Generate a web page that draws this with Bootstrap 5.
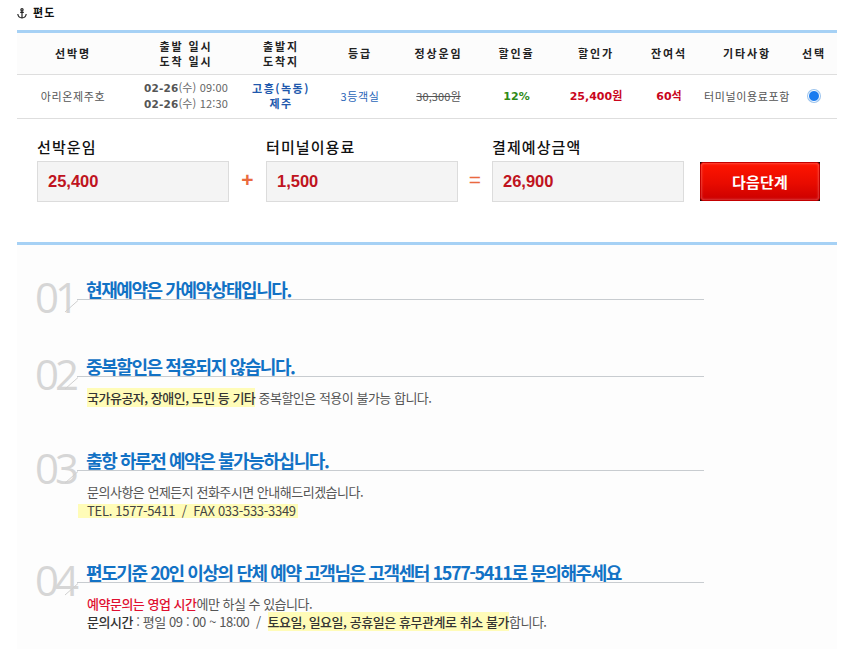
<!DOCTYPE html>
<html lang="ko">
<head>
<meta charset="utf-8">
<title>편도</title>
<link href="https://cdn.jsdelivr.net/npm/bootstrap@5.3.0/dist/css/bootstrap.min.css" rel="stylesheet">
<style>
html,body{height:649px;overflow:hidden}
body{background:#fff;font-family:"Noto Sans CJK KR","Liberation Sans",sans-serif;font-size:11px;color:#333}
.wrap-page{padding:0 15px 0 17px;width:852px}
.trip-head{height:30px;padding-top:4px;font-size:11px;font-weight:700;color:#111;line-height:16px;letter-spacing:1.2px;gap:6px}
.trip-table{table-layout:fixed;width:820px;margin:0;border-top:3px solid #a6d1f5;--bs-table-bg:transparent}
.trip-table th,.trip-table td{padding:0;text-align:center;vertical-align:middle;border-bottom:1px solid #dedede;font-size:11px;letter-spacing:.6px}
.trip-table th{height:43px;background:#fcfcfc;color:#222;font-weight:700;line-height:15px;letter-spacing:1.9px}
.trip-table td{height:44px;color:#555;line-height:15px;font-weight:400;padding-bottom:1px}
.c1{width:112px}.c2{width:114px}.c3{width:76px}.c4{width:82px}.c5{width:75px}.c6{width:81px}.c7{width:78px}.c8{width:68px}.c9{width:88px}.c10{width:46px}
.dtm{display:block;white-space:nowrap;color:#666;letter-spacing:.15px}
.dtm b{font-family:"DejaVu Sans",sans-serif;font-size:10.5px;color:#555}
.trip-table td.place{color:#2058ad;font-weight:700;letter-spacing:1.5px}
.trip-table td.grade{color:#2a66b8}
.old-fare{text-decoration:line-through;color:#555;letter-spacing:.1px}
.trip-table td.rate{color:#2f8a17;font-weight:700;font-family:"DejaVu Sans",sans-serif;letter-spacing:0}
.trip-table td.sale{color:#c9061c;font-weight:700;font-family:"DejaVu Sans","Noto Sans CJK KR",sans-serif;letter-spacing:0}
.pick.form-check-input{display:block;width:12px;height:12px;margin:0 auto;float:none;background:#1a7bef;border:1.500px solid #fff;box-shadow:0 0 0 1px #9cc4ee}
.fare-row{padding:19px 0 0 20px;height:126px;border-bottom:3px solid #a6d1f5}
.fare-cell{width:192px}
.fare-label{font-size:15px;line-height:17px;height:18px;font-weight:500;color:#111;letter-spacing:1.1px;margin-bottom:5px;white-space:nowrap}
.fare-box{height:41px;background:#f4f4f4;border:1px solid #dcdcdc;padding-left:10px;font:700 16.5px/39px "Liberation Sans",sans-serif;color:#bf1320}
.op{width:37px;height:41px;margin-top:23px;text-align:center;font:400 21px/38px "Liberation Sans",sans-serif;color:#ea6a3f}
.op-plus{font-weight:700}
.op-eq{width:34px}
.next-btn{width:120px;height:39px;margin:24px 0 0 16px;padding:0;border:0;border-radius:0;background:#111;color:#fff;font-weight:700;font-size:15px;letter-spacing:.2px}
.next-face{display:block;height:39px;line-height:37px;border:1px solid #c40000;border-radius:3px;background:linear-gradient(#ff1500,#e80b00 55%,#cc0000);box-shadow:inset 0 0 3px rgba(255,255,255,.45)}
.notice{background:#fdfdfd;height:404px;padding-top:29px}
.note-item{position:relative;width:687px;padding-left:70px}
.note-no{position:absolute;left:18px;top:0;font:400 42px/46px "Open Sans","Liberation Sans",sans-serif;color:#d6d6d6;letter-spacing:-4px}
.note-slash{position:absolute;left:47px;top:25px}
.note-title{height:26px;margin:0 0 0 -10px;padding-left:9px;border-bottom:1px solid #c8ccd0;font-size:18px;line-height:30px;font-weight:700;color:#1272c5;letter-spacing:-1.42px;white-space:nowrap}
.note-text{font-size:13px;line-height:18px;color:#555;letter-spacing:-.5px;white-space:nowrap}
.note-text b{font-weight:500;color:#333}
.note-text .alert-red{color:#e01030}
.last-line{word-spacing:.25px}
.hilite{background:#fffcb8}
.tel-line{display:inline-block;margin-left:-9px;padding:0 2px 0 9px;color:#444;letter-spacing:-.28px;line-height:14px;margin-top:3px}
.n1{height:77px}.n2{height:94px}.n3{height:112px}
.body-1{padding-top:12px}
</style>
</head>
<body>
<div class="wrap-page">
  <div class="trip-head d-flex align-items-start">
    <svg width="10" height="11" viewBox="0 0 10 11" class="mt-1" fill="none" stroke="#222" stroke-width="1.2"><circle cx="5" cy="1.8" r="1.1"/><path d="M5 3v7M3.2 4.4h3.600M.8 6c.3 2.500 2 3.800 4.200 4 2.200-.2 3.900-1.500 4.200-4"/></svg>
    <span>편도</span>
  </div>
  <table class="table trip-table">
    <colgroup><col class="c1"><col class="c2"><col class="c3"><col class="c4"><col class="c5"><col class="c6"><col class="c7"><col class="c8"><col class="c9"><col class="c10"></colgroup>
    <thead>
      <tr><th>선박명</th><th>출발 일시<br>도착 일시</th><th>출발지<br>도착지</th><th>등급</th><th>정상운임</th><th>할인율</th><th>할인가</th><th>잔여석</th><th>기타사항</th><th>선택</th></tr>
    </thead>
    <tbody>
      <tr>
        <td>아리온제주호</td>
        <td><span class="dtm"><b>02-26</b>(수) 09:00</span><span class="dtm"><b>02-26</b>(수) 12:30</span></td>
        <td class="place">고흥(녹동)<br>제주</td>
        <td class="grade">3등객실</td>
        <td><span class="old-fare">30,300원</span></td>
        <td class="rate">12%</td>
        <td class="sale">25,400원</td>
        <td class="sale">60석</td>
        <td>터미널이용료포함</td>
        <td><input class="form-check-input pick" type="radio" name="pick" checked aria-label="선택"></td>
      </tr>
    </tbody>
  </table>
  <div class="fare-row d-flex align-items-start">
    <div class="fare-cell"><div class="fare-label">선박운임</div><div class="fare-box">25,400</div></div>
    <div class="op op-plus">+</div>
    <div class="fare-cell"><div class="fare-label">터미널이용료</div><div class="fare-box">1,500</div></div>
    <div class="op op-eq">=</div>
    <div class="fare-cell"><div class="fare-label">결제예상금액</div><div class="fare-box">26,900</div></div>
    <button type="button" class="btn next-btn"><span class="next-face">다음단계</span></button>
  </div>
  <div class="notice">
    <div class="note-item n1">
      <span class="note-no">01</span>
      <svg class="note-slash" width="16" height="14" viewBox="0 0 16 14"><path d="M1 13 14 1.500" stroke="#d0d0d0" fill="none"/></svg>
      <h2 class="note-title">현재예약은 가예약상태입니다.</h2>
    </div>
    <div class="note-item n2">
      <span class="note-no">02</span>
      <svg class="note-slash" width="16" height="14" viewBox="0 0 16 14"><path d="M1 13 14 1.500" stroke="#d0d0d0" fill="none"/></svg>
      <h2 class="note-title">중복할인은 적용되지 않습니다.</h2>
      <div class="note-text body-1"><b class="hilite">국가유공자, 장애인, 도민 등 기타</b> 중복할인은 적용이 불가능 합니다.</div>
    </div>
    <div class="note-item n3">
      <span class="note-no">03</span>
      <svg class="note-slash" width="16" height="14" viewBox="0 0 16 14"><path d="M1 13 14 1.500" stroke="#d0d0d0" fill="none"/></svg>
      <h2 class="note-title">출항 하루전 예약은 불가능하십니다.</h2>
      <div class="note-text body-1">문의사항은 언제든지 전화주시면 안내해드리겠습니다.<br><span class="hilite tel-line">TEL. 1577-5411 &nbsp;/ &nbsp;FAX 033-533-3349</span></div>
    </div>
    <div class="note-item">
      <span class="note-no">04</span>
      <svg class="note-slash" width="16" height="14" viewBox="0 0 16 14"><path d="M1 13 14 1.500" stroke="#d0d0d0" fill="none"/></svg>
      <h2 class="note-title">편도기준 20인 이상의 단체 예약 고객님은 고객센터 1577-5411로 문의해주세요</h2>
      <div class="note-text body-1"><b class="alert-red">예약문의는 영업 시간</b>에만 하실 수 있습니다.<br><span class="last-line"><b>문의시간</b> : 평일 09 : 00 ~ 18:00 &nbsp;/ &nbsp;<b class="hilite">토요일, 일요일, 공휴일은 휴무관계로 취소 불가</b>합니다.</span></div>
    </div>
  </div>
</div>
</body>
</html>
